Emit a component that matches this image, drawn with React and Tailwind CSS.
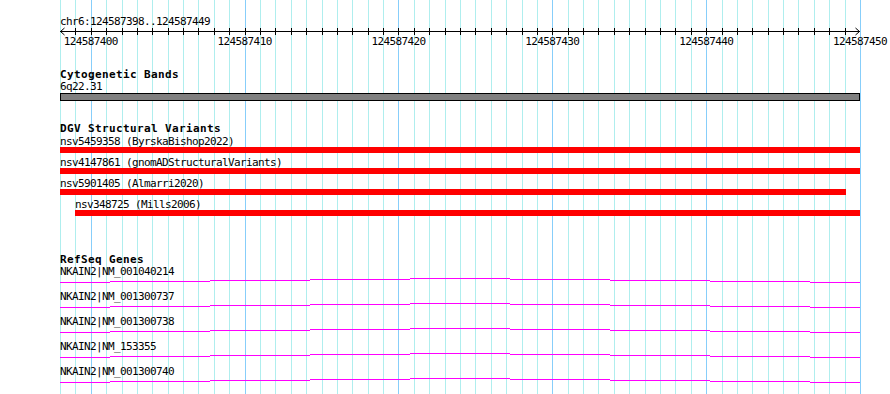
import React from 'react'

const FONT = { fontFamily: '"DejaVu Sans Mono", "Liberation Mono", monospace' }
const N = 52
const xs = Array.from({ length: N + 1 }, (_, i) => Math.round((i * 800) / N))

const tickLabels = ['124587400', '124587410', '124587420', '124587430', '124587440', '124587450']

const variants = [
  { label: 'nsv5459358 (ByrskaBishop2022)', cls: 'ml-0 w-[800px]' },
  { label: 'nsv4147861 (gnomADStructuralVariants)', cls: 'ml-0 w-[800px]' },
  { label: 'nsv5901405 (Almarri2020)', cls: 'ml-0 w-[786px]' },
  { label: 'nsv348725 (Mills2006)', cls: 'ml-[15px] w-[785px]' },
]

const genes = ['NKAIN2|NM_001040214', 'NKAIN2|NM_001300737', 'NKAIN2|NM_001300738', 'NKAIN2|NM_153355', 'NKAIN2|NM_001300740']

// hat-shaped intron, drawn the way the rasterizer stepped it
const steps = [
  [0, 50, 5], [50, 150, 4], [150, 250, 3], [250, 350, 2], [350, 450, 1],
  [450, 550, 2], [550, 650, 3], [650, 750, 4], [750, 800, 5],
]

const Label = ({ children, className = '' }) => (
  <div className={`h-[11px] leading-[11px] text-[11px] tracking-[-0.62px] text-black whitespace-nowrap ${className}`}>
    {children}
  </div>
)

const Title = ({ children, className = '' }) => (
  <div className={`h-[11px] leading-[11px] text-[11px] font-bold tracking-[0.38px] text-black whitespace-nowrap ${className}`}>
    {children}
  </div>
)

const App = () => {
  return (
    <div className="relative w-[890px] h-[394px] bg-white overflow-hidden" style={FONT}>
      {/* grid */}
      <svg className="absolute inset-0" width="890" height="394" shapeRendering="crispEdges">
        {xs.map((x, i) => (
          <line
            key={i}
            x1={60 + x + 0.5}
            x2={60 + x + 0.5}
            y1="0"
            y2="394"
            stroke={i % 10 === 2 ? '#87cefa' : '#afeeee'}
            strokeWidth="1"
          />
        ))}
      </svg>

      <div className="relative flex flex-col pl-[60px] w-[860px]">
        {/* ruler */}
        <Label className="mt-[16px]">chr6:124587398..124587449</Label>
        <svg width="800" height="9" shapeRendering="crispEdges" className="block">
          <line x1="0" x2="800" y1="4.5" y2="4.5" stroke="#000" />
          {xs.slice(1, N).map((x, i) => (
            <line key={i} x1={x + 0.5} x2={x + 0.5} y1="1" y2="8" stroke="#000" />
          ))}
          <polyline points="4.5,1 0.5,4.5 4.5,8" fill="none" stroke="#000" shapeRendering="auto" />
          <polyline points="795.5,1 799.5,4.5 795.5,8" fill="none" stroke="#000" shapeRendering="auto" />
        </svg>
        <div className="flex h-[11px] ml-[3.77px] gap-[99.85px]">
          {tickLabels.map((t) => (
            <Label key={t} className="w-[54px] shrink-0">{t}</Label>
          ))}
        </div>

        {/* cytogenetic bands */}
        <Title className="mt-[22px]">Cytogenetic Bands</Title>
        <Label className="mt-[1px]">6q22.31</Label>
        <div className="mt-[1px] w-[800px] h-[8px] border border-black bg-[#808080]" />

        {/* DGV */}
        <Title className="mt-[22px]">DGV Structural Variants</Title>
        <div className="mt-[2px] flex flex-col gap-[4px]">
          {variants.map((v) => (
            <div key={v.label} className="flex flex-col">
              <Label className={v.cls}>{v.label}</Label>
              <div className={`h-[6px] bg-[#ff0000] ${v.cls}`} />
            </div>
          ))}
        </div>

        {/* RefSeq */}
        <Title className="mt-[38px]">RefSeq Genes</Title>
        <div className="mt-[1px] flex flex-col">
          {genes.map((g) => (
            <div key={g} className="flex flex-col h-[25px]">
              <Label>{g}</Label>
              <svg width="800" height="14" shapeRendering="crispEdges" className="block">
                {steps.map(([a, b, y]) => (
                  <rect key={a} x={a} y={y} width={b - a} height="1" fill="#ff00ff" />
                ))}
              </svg>
            </div>
          ))}
        </div>
      </div>
    </div>
  )
}

export default App
